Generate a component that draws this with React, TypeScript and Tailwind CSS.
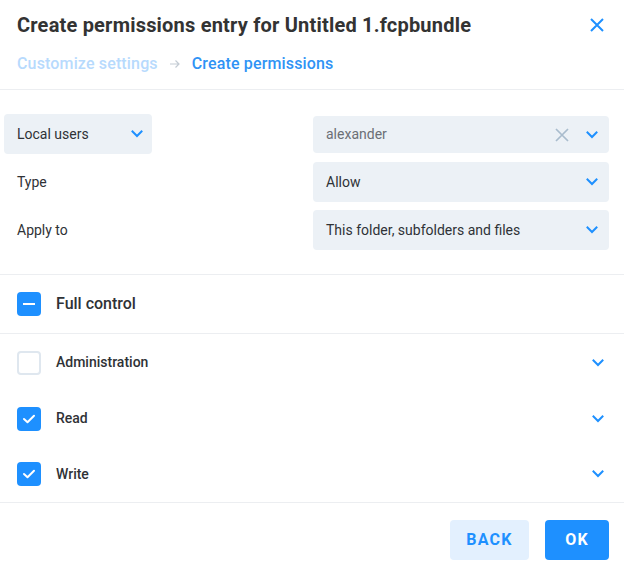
import React from "react";

const Chevron = ({ className = "" }: { className?: string }) => (
  <svg width="12" height="8" viewBox="0 0 12 8" className={className} fill="none">
    <path d="M1.5 1.5 L6 6 L10.5 1.5" stroke="#1e90ff" strokeWidth="2" strokeLinecap="square" />
  </svg>
);

const Check = () => (
  <svg width="14" height="10" viewBox="0 0 14 10" fill="none">
    <path d="M2 5 L5.5 8.3 L12 1.8" stroke="white" strokeWidth="2" strokeLinecap="round" strokeLinejoin="round" />
  </svg>
);

function Select({ text, clear = false, muted = false, h }: { text: string; clear?: boolean; muted?: boolean; h: string }) {
  return (
    <div className={`${h} w-[296px] rounded bg-[#ecf1f6] flex items-center pl-[13px] pr-[11px]`}>
      <span className={`flex-1 text-[14px] ${muted ? "text-[#6b6f75]" : "text-[#2f3236]"}`}>{text}</span>
      {clear && (
        <svg width="14" height="14" viewBox="0 0 14 14" className="mr-[17px]" fill="none">
          <path d="M1 1 L13 13 M13 1 L1 13" stroke="#a9bccd" strokeWidth="1.7" />
        </svg>
      )}
      <Chevron />
    </div>
  );
}

function Row({ label, checked }: { label: string; checked: boolean }) {
  return (
    <div className="h-[56px] flex items-center pl-[17px] pr-[20px]">
      {checked ? (
        <div className="w-[24px] h-[24px] rounded bg-[#1e90ff] flex items-center justify-center">
          <Check />
        </div>
      ) : (
        <div className="w-[24px] h-[24px] rounded border-2 border-[#dfe7ef] bg-white" />
      )}
      <span className="ml-[15px] flex-1 text-[14px] font-medium text-[#2f3236]">{label}</span>
      <Chevron />
    </div>
  );
}

export default function App() {
  return (
    <div className="w-[624px] h-[566px] bg-white flex flex-col" style={{ fontFamily: "Roboto, 'Liberation Sans', sans-serif" }}>
      <div className="px-[17px] pt-[12px] border-b border-[#eceef1] h-[90px]">
        <div className="flex items-center justify-between">
          <h1 className="text-[20px] leading-[26px] font-bold text-[#333] tracking-[0.2px]">Create permissions entry for Untitled 1.fcpbundle</h1>
          <svg width="14" height="14" viewBox="0 0 14 14" className="mr-[3px]" fill="none">
            <path d="M1 1 L13 13 M13 1 L1 13" stroke="#1e90ff" strokeWidth="2" />
          </svg>
        </div>
        <div className="mt-[15px] flex items-center text-[16px] font-medium leading-[22px] tracking-[0.15px]">
          <span className="text-[#b7dafd]">Customize settings</span>
          <svg width="12" height="10" viewBox="0 0 12 10" className="mx-[11px]" fill="none">
            <path d="M1 5 H10 M6.5 1.5 L10 5 L6.5 8.5" stroke="#c3cbd3" strokeWidth="1.2" />
          </svg>
          <span className="text-[#2f93f5]">Create permissions</span>
        </div>
      </div>

      <div className="h-[185px] border-b border-[#eceef1] flex pt-[24px]">
        <div className="w-[313px] pl-[4px] flex flex-col">
          <div className="h-[40px] w-[148px] rounded bg-[#ecf1f6] flex items-center pl-[13px] pr-[9px]">
            <span className="flex-1 text-[14px] text-[#2f3236]">Local users</span>
            <Chevron />
          </div>
          <div className="h-[48px] flex items-center pl-[13px] mt-[4px] text-[14px] text-[#2f3236]">Type</div>
          <div className="h-[48px] flex items-center pl-[13px] text-[14px] text-[#2f3236]">Apply to</div>
        </div>
        <div className="flex flex-col pt-[2px]">
          <Select h="h-[37px]" text="alexander" clear muted />
          <div className="h-[9px]" />
          <Select h="h-[40px]" text="Allow" />
          <div className="h-[8px]" />
          <Select h="h-[40px]" text="This folder, subfolders and files" />
        </div>
      </div>

      <div className="h-[59px] border-b border-[#eceef1] flex items-center pl-[17px]">
        <div className="w-[24px] h-[24px] rounded bg-[#1e90ff] flex items-center justify-center">
          <div className="w-[12px] h-[2.5px] bg-white" />
        </div>
        <span className="ml-[15px] text-[16px] font-medium text-[#2f3236]">Full control</span>
      </div>

      <div className="flex flex-col pt-[1px] h-[169px] border-b border-[#eceef1]">
        <Row label="Administration" checked={false} />
        <Row label="Read" checked />
        <Row label="Write" checked />
      </div>

      <div className="flex justify-end gap-[16px] pr-[15px] pt-[17px]">
        <button className="h-[40px] w-[79px] rounded bg-[#e3f0fe] text-[#1e90ff] text-[16px] font-bold tracking-[1.2px]">BACK</button>
        <button className="h-[40px] w-[64px] rounded bg-[#1e90ff] text-white text-[16px] font-bold tracking-[1.2px]">OK</button>
      </div>
    </div>
  );
}
